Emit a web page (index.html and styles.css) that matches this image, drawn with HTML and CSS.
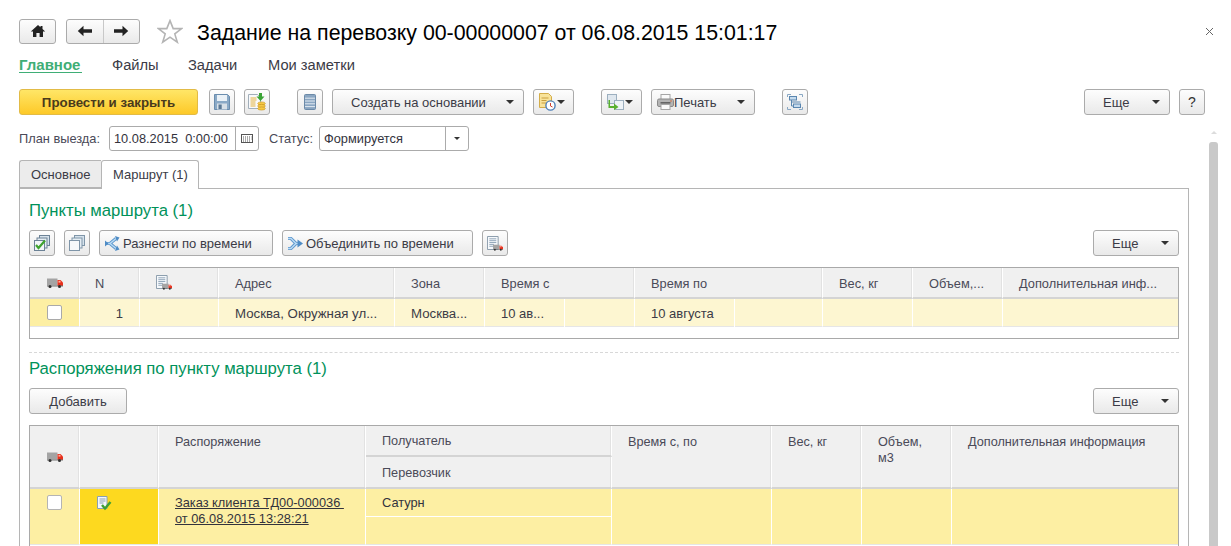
FILE: index.html
```html
<!DOCTYPE html>
<html lang="ru">
<head>
<meta charset="utf-8">
<title>Задание на перевозку</title>
<link rel="stylesheet" href="styles.css">
</head>
<body>
<svg class="defs" width="0" height="0" aria-hidden="true">
  <symbol id="truck" viewBox="0 0 16 10">
    <rect x="0" y="0.5" width="10.5" height="7" fill="#a4a4a4"/>
    <path d="M10.5 2h3l2.5 2.5v3.5h-5.500z" fill="#e8301c"/>
    <rect x="11.500" y="2.800" width="2" height="1.800" fill="#ffb0a0"/>
    <rect x="0" y="7.500" width="16" height="1" fill="#707070"/>
    <circle cx="3" cy="8.500" r="1.500" fill="#2f2f2f"/>
    <circle cx="12.500" cy="8.500" r="1.500" fill="#2f2f2f"/>
  </symbol>
  <symbol id="doc" viewBox="0 0 14 15">
    <path d="M.5.5h11.500v14H.5z" fill="#f6f9fc" stroke="#8597a8"/>
    <path d="M2.500 3h7.500M2.500 5h7.500M2.500 7h7.500M2.500 9h5M2.500 11h4" stroke="#8aa0b4" fill="none"/>
  </symbol>
</svg>

<div class="page">
  <header class="topbar">
    <button class="btn navbtn home" aria-label="Домой">
      <svg width="16" height="14" viewBox="0 0 16 14"><path d="M8 1 0.8 7.400h2.200V13h3.400V9h3.200v4H13V7.400h2.200L12.500 5V2h-2v1.200z" fill="#222"/></svg>
    </button>
    <div class="btn navgroup">
      <span class="navpart"><svg width="16" height="12" viewBox="0 0 16 12"><path d="M0.800 6 6.500 0.800v3.400h8.500v3.600H6.500v3.400z" fill="#222"/></svg></span>
      <span class="navpart last"><svg width="16" height="12" viewBox="0 0 16 12"><path d="M15.200 6 9.500 0.800v3.400H1v3.600h8.500v3.400z" fill="#222"/></svg></span>
    </div>
    <svg class="star" width="26" height="25" viewBox="0 0 26 25"><path d="M13 1.600l3.200 8h8.400l-6.800 5.300 2.500 8.300-7.300-5-7.300 5 2.500-8.300L1.400 9.600h8.400z" fill="#fff" stroke="#b4b4b4" stroke-width="1.600"/></svg>
    <h1 class="title">Задание на перевозку 00-00000007 от 06.08.2015 15:01:17</h1>
    <svg class="close" width="9" height="9" viewBox="0 0 9 9"><path d="M1 1l7 7M8 1 1 8" stroke="#666" stroke-width="1"/></svg>
  </header>

  <nav class="sections">
    <a class="section active">Главное</a>
    <a class="section s-files">Файлы</a>
    <a class="section s-tasks">Задачи</a>
    <a class="section s-notes">Мои заметки</a>
  </nav>

  <div class="toolbar main-tb">
    <button class="btn primary">Провести и закрыть</button>
    <button class="btn icon" aria-label="Записать">
      <svg width="16" height="16" viewBox="0 0 16 16"><path d="M.5.500h13l2 2v13H.5z" fill="#8aa9c6" stroke="#6a8dae"/><rect x="3" y="1" width="10" height="6" fill="#eaf1f7"/><rect x="3" y="9.500" width="10" height="6" fill="#d8e0e7"/><rect x="4.500" y="10.500" width="3.200" height="4.500" fill="#5b7895"/></svg>
    </button>
    <button class="btn icon" aria-label="Провести">
      <svg width="18" height="18" viewBox="0 0 18 18"><path d="M.5 1.500h9l3 3v11H.5z" fill="#f8f9fb" stroke="#a2afba"/><path d="M2.500 5h6M2.500 7h6M2.500 9h5M2.500 11h5M2.500 13h5" stroke="#e3b23c"/><path d="M11 0h3v3.500h2.500L12.500 8 8.500 3.500H11z" fill="#3aa335"/><ellipse cx="13.500" cy="10.500" rx="3.800" ry="1.600" fill="#f6c945" stroke="#c79320" stroke-width=".6"/><ellipse cx="13.500" cy="13" rx="3.800" ry="1.600" fill="#f6c945" stroke="#c79320" stroke-width=".6"/><ellipse cx="13.500" cy="15.500" rx="3.800" ry="1.600" fill="#f6c945" stroke="#c79320" stroke-width=".6"/></svg>
    </button>
    <button class="btn icon gap-l" aria-label="Журнал">
      <svg width="12" height="16" viewBox="0 0 12 16"><rect x=".5" y=".5" width="11" height="15" rx="1" fill="#8aa6c2" stroke="#6c8aa8"/><path d="M1 4.200h10M1 7h10M1 9.800h10M1 12.600h10" stroke="#e3ebf2"/></svg>
    </button>
    <button class="btn caretbtn w-create"><span>Создать на основании</span><i class="caret"></i></button>
    <button class="btn splitico w-ico" aria-label="Документы">
      <svg width="17" height="18" viewBox="0 0 17 18"><path d="M.5.500h9l3 3v11H.5z" fill="#f8e39a" stroke="#d3ad4a"/><path d="M2.500 5h7M2.500 7.500h5M2.500 10h5" stroke="#c99f3e"/><circle cx="11.500" cy="12.500" r="4.600" fill="#fff" stroke="#4d7fb8" stroke-width="1.400"/><path d="M11.500 10v3l2 1" stroke="#d2402f" fill="none"/></svg>
      <i class="caret"></i>
    </button>
    <button class="btn splitico w-ico gap-l" aria-label="Связи">
      <svg width="17" height="16" viewBox="0 0 17 16"><rect x=".5" y=".5" width="9" height="9" fill="#dfe7ee" stroke="#9cafbf"/><rect x="7.500" y="6.500" width="9" height="9" fill="#eef3f7" stroke="#9cafbf"/><path d="M3 6v6h4V9.500L11.500 13 7 16v-2H1.500V6z" fill="#58b030"/></svg>
      <i class="caret"></i>
    </button>
    <button class="btn caretbtn w-print">
      <svg class="printer" width="17" height="16" viewBox="0 0 17 16"><rect x="4" y=".5" width="9" height="5" fill="#fbfbfb" stroke="#a6a6a6"/><rect x=".5" y="5" width="16" height="7.500" rx="1.500" fill="#b4b4b4" stroke="#8a8a8a"/><rect x="3.500" y="8" width="10" height="1.600" fill="#666"/><rect x="4" y="10.500" width="9" height="5" fill="#fbfbfb" stroke="#a6a6a6"/><circle cx="14" cy="7" r=".8" fill="#d36a3a"/></svg>
      <span class="print-label">Печать</span><i class="caret"></i>
    </button>
    <button class="btn icon gap-l" aria-label="Структура">
      <svg width="16" height="16" viewBox="0 0 16 16"><path d="M.5 3V.5H4M.5 13v2.500H4M15.500 3V.5H12M15.500 13v2.500H12" stroke="#8aa8c4" fill="none"/><rect x="2.500" y="2.500" width="7" height="3.500" fill="#c5dbee" stroke="#5a86b0"/><rect x="6.500" y="10" width="7" height="3.500" fill="#c5dbee" stroke="#5a86b0"/><path d="M4.500 6v6H6.500M4.500 8h9" stroke="#5a86b0" fill="none"/></svg>
    </button>
    <button class="btn caretbtn w-more push"><span>Еще</span><i class="caret"></i></button>
    <button class="btn icon help">?</button>
  </div>

  <div class="formrow">
    <label class="flabel">План выезда:</label>
    <div class="field">
      <span class="fval date">10.08.2015&nbsp; 0:00:00</span>
      <span class="fbtn"><svg width="12" height="9" viewBox="0 0 12 9"><rect x=".5" y=".5" width="11" height="8" fill="#fff" stroke="#555"/><path d="M2 3h1M4 3h1M6 3h1M8 3h1M10 3h.5M2 5h1M4 5h1M6 5h1M8 5h1M10 5h.5M2 7h1M4 7h1M6 7h1M8 7h1" stroke="#555"/></svg></span>
    </div>
    <label class="flabel status-l">Статус:</label>
    <div class="field">
      <span class="fval">Формируется</span>
      <span class="fbtn"><i class="caret small"></i></span>
    </div>
  </div>

  <div class="tabs">
    <div class="tab">Основное</div>
    <div class="tab current">Маршрут (1)</div>
  </div>

  <main class="panel">
    <h2 class="grouptitle">Пункты маршрута (1)</h2>
    <div class="toolbar tb-sub">
      <button class="btn icon" aria-label="Выбрать все">
        <svg width="16" height="16" viewBox="0 0 16 16"><rect x="5.500" y=".5" width="10" height="10" fill="#d6e2ec" stroke="#6c8296"/><rect x="3" y="3" width="10" height="10" fill="#e6eef4" stroke="#6c8296"/><rect x=".5" y="5.500" width="10" height="10" fill="#f2f6f9" stroke="#6c8296"/><path d="M2 10l2.500 3L11 5.500" stroke="#3fa32f" stroke-width="2.200" fill="none"/></svg>
      </button>
      <button class="btn icon" aria-label="Снять все">
        <svg width="16" height="16" viewBox="0 0 16 16"><rect x="5.500" y=".5" width="10" height="10" fill="#d6e2ec" stroke="#7f95a8"/><rect x="3" y="3" width="10" height="10" fill="#e6eef4" stroke="#7f95a8"/><rect x=".5" y="5.500" width="10" height="10" fill="#f6f9fb" stroke="#7f95a8"/></svg>
      </button>
      <button class="btn textico w-spread">
        <svg width="15" height="15" viewBox="0 0 15 15"><path d="M1 7.500h4L11 2.500M5 7.500l6 5" stroke="#5b96cc" stroke-width="3.200" fill="none"/><path d="M1 7.500h4L11 2.500M5 7.500l6 5" stroke="#bcdcf5" stroke-width="1.300" fill="none"/><path d="M10 0l4.500 1.500L12 5.500zM10 15l4.500-1.500L12 9.500zM0 4.500v6l3.500-3z" fill="#4f8cc5"/></svg>
        <span>Разнести по времени</span>
      </button>
      <button class="btn textico w-merge">
        <svg width="15" height="15" viewBox="0 0 15 15"><path d="M0 2.500h3l5 5h2M0 12.500h3l5-5" stroke="#5b96cc" stroke-width="3.200" fill="none"/><path d="M0 2.500h3l5 5h2M0 12.500h3l5-5" stroke="#bcdcf5" stroke-width="1.300" fill="none"/><path d="M9.500 3.500l5.500 4-5.500 4z" fill="#4f8cc5"/></svg>
        <span>Объединить по времени</span>
      </button>
      <button class="btn icon" aria-label="Отчет">
        <span class="doc-truck"><svg class="dt-doc" width="13" height="14"><use href="#doc"/></svg><svg class="dt-truck" width="10" height="7"><use href="#truck"/></svg></span>
      </button>
      <button class="btn caretbtn w-more push"><span>Еще</span><i class="caret"></i></button>
    </div>

    <div class="table t1">
      <div class="th center"><svg width="16" height="10"><use href="#truck"/></svg></div>
      <div class="th n">N</div>
      <div class="th ico"><span class="doc-truck"><svg class="dt-doc" width="13" height="14"><use href="#doc"/></svg><svg class="dt-truck" width="10" height="7"><use href="#truck"/></svg></span></div>
      <div class="th">Адрес</div>
      <div class="th">Зона</div>
      <div class="th">Время с</div>
      <div class="th">Время по</div>
      <div class="th">Вес, кг</div>
      <div class="th">Объем,...</div>
      <div class="th last">Дополнительная инф...</div>

      <div class="td mark center"><span class="check"></span></div>
      <div class="td num">1</div>
      <div class="td"></div>
      <div class="td addr">Москва, Окружная ул...</div>
      <div class="td addr">Москва...</div>
      <div class="td split s-from"><span class="part">10 ав...</span><span class="part"></span></div>
      <div class="td split s-to"><span class="part">10 августа</span><span class="part"></span></div>
      <div class="td"></div>
      <div class="td"></div>
      <div class="td last"></div>
      <div class="tail"></div>
    </div>

    <div class="splitter"></div>

    <h2 class="grouptitle second">Распоряжения по пункту маршрута (1)</h2>
    <div class="toolbar tb-sub">
      <button class="btn w-add">Добавить</button>
      <button class="btn caretbtn w-more push"><span>Еще</span><i class="caret"></i></button>
    </div>

    <div class="table t2">
      <div class="th2 span2 center"><svg width="16" height="10"><use href="#truck"/></svg></div>
      <div class="th2 span2"></div>
      <div class="th2 span2">Распоряжение</div>
      <div class="th2 stack top">Получатель</div>
      <div class="th2 span2">Время с, по</div>
      <div class="th2 span2">Вес, кг</div>
      <div class="th2 span2 narrow">Объем,<br>м3</div>
      <div class="th2 span2 last">Дополнительная информация</div>
      <div class="th2 stack bottom">Перевозчик</div>

      <div class="td2 span2 check-cell"><span class="check"></span></div>
      <div class="td2 span2 status">
        <svg width="15" height="15" viewBox="0 0 15 15"><path d="M.5.500h9.500v12H.5z" fill="#f4f8fb" stroke="#8aa0b4"/><path d="M2.500 3h6M2.500 5h6M2.500 7h4" stroke="#8aa0b4"/><path d="M5 9l3 3.500L13.500 6" stroke="#3f9f35" stroke-width="2.400" fill="none"/></svg>
      </div>
      <div class="td2 span2 order"><a>Заказ клиента ТД00-000036&nbsp;<br>от 06.08.2015 13:28:21</a></div>
      <div class="td2 sub top">Сатурн</div>
      <div class="td2 span2"></div>
      <div class="td2 span2"></div>
      <div class="td2 span2"></div>
      <div class="td2 span2 last"></div>
      <div class="td2 sub bottom"></div>
    </div>
  </main>

  <div class="scrollbar" aria-hidden="true">
    <span class="scroll-up"></span>
    <span class="scroll-thumb"></span>
  </div>
</div>
</body>
</html>
```

FILE: styles.css
```css
* { box-sizing: border-box; }

html, body {
  margin: 0;
  height: 546px;
  overflow: hidden;
  background: #fff;
}

body, button {
  font-family: "Liberation Sans", Arial, sans-serif;
  font-size: 13px;
  color: #3b3b46;
}

.defs { position: absolute; }

.page {
  position: relative;
  width: 1231px;
  height: 546px;
  padding: 19px 0 0 19px;
  overflow: hidden;
}

/* buttons */
.btn {
  display: inline-flex;
  align-items: center;
  justify-content: center;
  height: 26px;
  padding: 0;
  border: 1px solid #ababab;
  border-radius: 3px;
  background: linear-gradient(#fdfdfd, #e9e9e9);
  white-space: nowrap;
  flex: none;
}

.caret {
  display: inline-block;
  width: 0;
  height: 0;
  border-left: 4px solid transparent;
  border-right: 4px solid transparent;
  border-top: 4px solid #333;
}

.caret.small {
  border-left-width: 3px;
  border-right-width: 3px;
  border-top-width: 3px;
}

/* top bar */
.topbar {
  display: flex;
  align-items: center;
  height: 24px;
}

.navbtn, .navgroup { height: 25px; }
.home { width: 37px; }

.navgroup {
  width: 74px;
  margin-left: 10px;
}

.navpart {
  flex: 1;
  height: 100%;
  display: flex;
  align-items: center;
  justify-content: center;
  border-right: 1px solid #c8c8c8;
}

.navpart.last { border-right: 0; }

.star { margin-left: 17px; }

.title {
  margin: 4px 0 0 14px;
  font-size: 21.33px;
  font-weight: 400;
  line-height: 28px;
  color: #000;
  white-space: nowrap;
}

.close {
  position: absolute;
  left: 1205px;
  top: 27px;
}

/* section nav */
.sections {
  display: flex;
  height: 18px;
  margin-top: 13px;
  font-size: 14.7px;
  line-height: 18px;
}

.section { color: #3b3b46; }

.section.active {
  width: 63px;
  height: 17px;
  font-size: 15px;
  font-weight: 700;
  color: #3fae76;
  border-bottom: 1px solid #3fae76;
}

.s-files { margin-left: 30px; width: 76px; }
.s-tasks { width: 80px; }

/* toolbars */
.toolbar {
  display: flex;
  gap: 9px;
}

.main-tb {
  width: 1186px;
  margin-top: 15px;
}

.primary {
  width: 179px;
  font-size: 13.3px;
  font-weight: 700;
  color: #4a3a1c;
  border-color: #e2bb46;
  background: linear-gradient(#ffe667, #fdc928);
  margin-right: 2px;
}

.icon { width: 26px; }
.gap-l { margin-left: 18px; }
.push { margin-left: auto; }

.caretbtn {
  justify-content: space-between;
}

.w-create {
  width: 192px;
  padding: 0 9px 0 18px;
}

.w-ico {
  width: 41px;
  gap: 1px;
  justify-content: flex-start;
  padding-left: 5px;
}

.w-print {
  width: 104px;
  padding: 0 9px 0 5px;
  justify-content: flex-start;
}

.w-print .caret { margin-left: auto; }

.w-more {
  width: 86px;
  padding: 0 9px 0 18px;
}

.help {
  font-size: 14px;
  color: #333;
}

/* form row */
.formrow {
  display: flex;
  align-items: center;
  height: 25px;
  margin-top: 11px;
  font-size: 12.8px;
}

.flabel {
  width: 90px;
  color: #4a4a58;
}

.status-l {
  width: 50px;
  margin-left: 10px;
}

.field {
  display: flex;
  width: 150px;
  height: 25px;
  border: 1px solid #ababab;
  border-radius: 3px;
}

.fval {
  flex: 1;
  padding-left: 4px;
  line-height: 23px;
  color: #33333d;
}

.fbtn {
  width: 23px;
  display: flex;
  align-items: center;
  justify-content: center;
  border-left: 1px solid #ababab;
}

/* tabs */
.tabs {
  display: flex;
  height: 29px;
  margin-top: 9px;
  position: relative;
  z-index: 1;
}

.tab {
  width: 82px;
  height: 28px;
  padding-left: 11px;
  line-height: 27px;
  background: #ececec;
  border: 1px solid #b5b5b5;
  border-right: 0;
  border-radius: 3px 0 0 0;
  color: #3b3b46;
}

.tab.current {
  width: 98px;
  height: 29px;
  background: #fff;
  border-right: 1px solid #b5b5b5;
  border-bottom: 0;
  border-radius: 3px 3px 0 0;
}

/* panel */
.panel {
  width: 1170px;
  height: 400px;
  margin-top: -1px;
  padding: 0 9px;
  border: 1px solid #b5b5b5;
  border-bottom: 0;
}

.grouptitle {
  margin: 12px 0 0;
  font-size: 16.7px;
  font-weight: 400;
  line-height: 20px;
  color: #00925a;
  white-space: nowrap;
}

.grouptitle.second { margin-top: 6px; }

.tb-sub { margin-top: 9px; }

.w-spread, .w-merge {
  justify-content: flex-start;
  padding-left: 5px;
  gap: 3px;
}

.w-spread { width: 174px; }
.w-merge { width: 191px; }
.w-add { width: 98px; }

.doc-truck {
  position: relative;
  display: block;
  width: 16px;
  height: 15px;
}

.dt-doc { position: absolute; left: 0; top: 0; }
.dt-truck { position: absolute; right: 0; bottom: 0; }

/* tables */
.table {
  display: grid;
  width: 1150px;
  margin-top: 11px;
  border: 1px solid #a9a9a9;
}

.t1 {
  grid-template-columns: 50px 60px 79px 176px 90px 150px 188px 90px 90px 1fr;
  grid-template-rows: 31px 28px 11px;
  height: 72px;
}

.th {
  height: 31px;
  padding-left: 16px;
  font-size: 12.8px;
  line-height: 31px;
  background: #f0f0f0;
  border-right: 1px solid #fff;
  border-bottom: 2px solid #d4d4d4;
  color: #4a4a58;
  box-shadow: inset -1px 0 0 #e2e2e2;
}

.th.center, .th2.center {
  display: flex;
  align-items: center;
  justify-content: center;
  padding: 0;
}

.th.n { padding-left: 15px; }
.th.ico { padding: 7px 0 0 16px; }
.th.last, .td.last, .th2.last, .td2.last { border-right: 0; box-shadow: none; }

.td {
  height: 28px;
  padding-left: 16px;
  line-height: 29px;
  background: #fdf6d1;
  border-right: 1px solid #fff;
  border-bottom: 1px solid #e6e6e6;
  color: #3b3b46;
  white-space: nowrap;
}

.td.addr { font-size: 13.25px; }

.td.mark {
  display: flex;
  align-items: center;
  justify-content: center;
  padding: 0;
  background: #fdefa3;
}

.td.num {
  padding: 0 16px 0 0;
  text-align: right;
}

.td.split {
  display: grid;
  padding: 0;
}

.s-from { grid-template-columns: 80px 1fr; }
.s-to { grid-template-columns: 100px 1fr; }

.part {
  padding-left: 16px;
  border-right: 1px solid #fff;
}

.part:last-child { border-right: 0; }

.check {
  display: block;
  width: 15px;
  height: 15px;
  background: #fff;
  border: 1px solid #a9a9a9;
  border-radius: 2px;
}

.tail { grid-column: 1 / -1; }

.splitter {
  margin-top: 13px;
  border-top: 1px dashed #d8d8d8;
}

.t2 {
  grid-template-columns: 50px 79px 207px 246px 160px 90px 90px 1fr;
  grid-template-rows: 31px 32px 28px 28px 20px;
}

.th2 {
  padding: 8px 0 0 16px;
  font-size: 12.7px;
  line-height: 16px;
  background: #f0f0f0;
  border-right: 1px solid #fff;
  border-bottom: 2px solid #d4d4d4;
  color: #4a4a58;
  box-shadow: inset -1px 0 0 #e2e2e2;
}

.span2 { grid-row: span 2; }
.th2.stack { padding-top: 7px; }
.th2.bottom { padding-top: 8px; }

.td2 {
  background: #fdefa3;
  border-right: 1px solid #fff;
  border-bottom: 1px solid #e6e6e6;
  font-size: 12.8px;
  line-height: 16px;
  color: #33333d;
}

.check-cell { padding: 6px 0 0 17px; }
.check-cell .check { border-color: #b4b4b4; }

.status {
  background: #fdd91f;
  padding: 7px 0 0 17px;
}

.order { padding: 6px 0 0 16px; }

.order a {
  text-decoration: underline;
  color: #33333d;
}

.td2.sub { padding: 6px 0 0 16px; }
.td2.sub.top { border-bottom: 1px solid #fff; }

/* scrollbar overlay */
.scrollbar {
  position: absolute;
  left: 1209px;
  top: 130px;
  width: 9px;
  height: 416px;
}

.scroll-up {
  position: absolute;
  left: 2px;
  top: 1px;
  border-left: 3px solid transparent;
  border-right: 3px solid transparent;
  border-bottom: 3px solid #dcdcdc;
}

.scroll-thumb {
  position: absolute;
  left: 0;
  top: 12px;
  bottom: 0;
  width: 9px;
  background: #c9c9c9;
  border-radius: 3px 3px 0 0;
}
```
